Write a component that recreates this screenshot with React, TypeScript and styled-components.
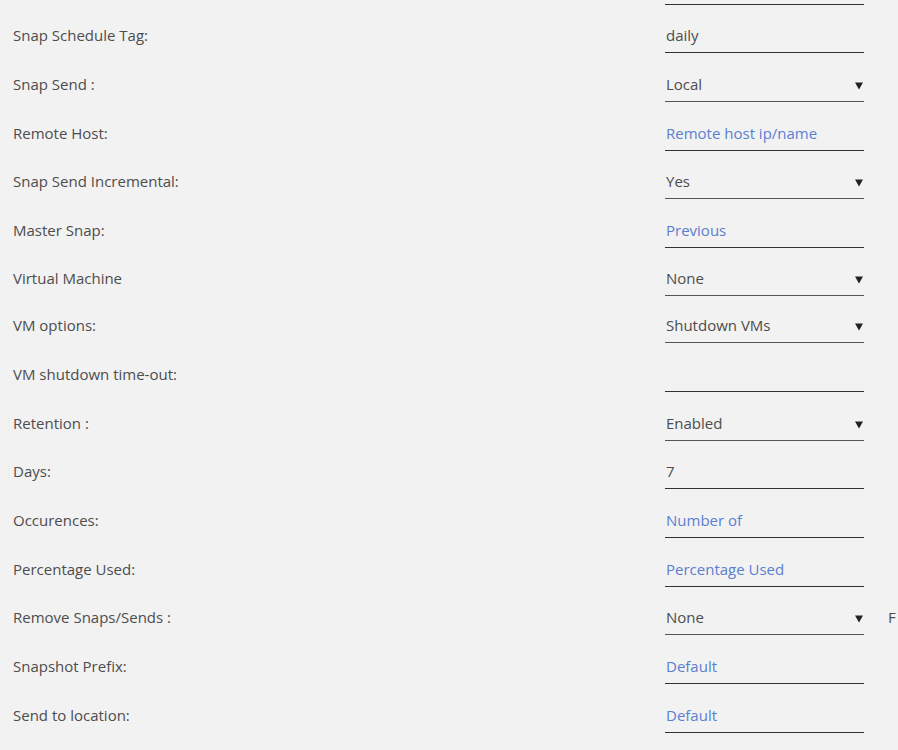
import React from 'react';
import styled, { createGlobalStyle } from 'styled-components';

const GlobalStyle = createGlobalStyle`
  html, body {
    margin: 0;
    padding: 0;
    background: #f2f2f2;
    font-family: "Open Sans", "Noto Sans", sans-serif;
    overflow: hidden;
  }
`;

type Field =
  | { label: string; kind: 'text'; value?: string; placeholder?: string }
  | { label: string; kind: 'select'; value: string };

const fields: Field[] = [
  { label: 'Snap Schedule Tag:', kind: 'text', value: 'daily' },
  { label: 'Snap Send :', kind: 'select', value: 'Local' },
  { label: 'Remote Host:', kind: 'text', placeholder: 'Remote host ip/name' },
  { label: 'Snap Send Incremental:', kind: 'select', value: 'Yes' },
  { label: 'Master Snap:', kind: 'text', placeholder: 'Previous' },
  { label: 'Virtual Machine', kind: 'select', value: 'None' },
  { label: 'VM options:', kind: 'select', value: 'Shutdown VMs' },
  { label: 'VM shutdown time-out:', kind: 'text' },
  { label: 'Retention :', kind: 'select', value: 'Enabled' },
  { label: 'Days:', kind: 'text', value: '7' },
  { label: 'Occurences:', kind: 'text', placeholder: 'Number of' },
  { label: 'Percentage Used:', kind: 'text', placeholder: 'Percentage Used' },
  { label: 'Remove Snaps/Sends :', kind: 'select', value: 'None' },
  { label: 'Snapshot Prefix:', kind: 'text', placeholder: 'Default' },
  { label: 'Send to location:', kind: 'text', placeholder: 'Default' },
];

const Form = styled.div`
  margin-top: -44px;
  width: 898px;
`;

const Row = styled.div<{ $h?: number }>`
  display: grid;
  grid-template-columns: 665px 199px 1fr;
  align-items: end;
  height: ${(p) => p.$h ?? 48.65}px;
`;

const Label = styled.div`
  padding-left: 13px;
  padding-bottom: 8px;
  font-size: 15px;
  color: #4d4d4d;
  white-space: nowrap;
`;

const Control = styled.div<{ $select?: boolean }>`
  position: relative;
  height: 34px;
  box-sizing: border-box;
  border-bottom: 1px solid ${(p) => (p.$select ? '#555' : '#333')};
  display: flex;
  align-items: center;
  padding: 0 0 1px 1px;
  font-size: 15px;
  color: #4d4d4d;
`;

const Placeholder = styled.span`
  color: #5a7fd0;
`;

const Arrow = styled.svg`
  position: absolute;
  right: 1px;
  top: 14px;
`;

const Extra = styled.div`
  padding-left: 24px;
  padding-bottom: 8px;
  font-size: 15px;
  color: #4d4d4d;
  white-space: nowrap;
`;

export default function App() {
  return (
    <>
      <GlobalStyle />
      <Form>
        <Row>
          <span />
          <Control />
        </Row>
        {fields.map((f, i) => (
          <Row key={i} $h={f.label === 'VM options:' ? 47 : undefined}>
            <Label>{f.label}</Label>
            <Control $select={f.kind === 'select'}>
              {f.kind === 'select' ? (
                <>
                  {f.value}
                  <Arrow width="8" height="8" viewBox="0 0 8 8">
                    <path d="M0 0.5 H8 L4 7.5 Z" fill="#222" />
                  </Arrow>
                </>
              ) : f.value ? (
                f.value
              ) : f.placeholder ? (
                <Placeholder>{f.placeholder}</Placeholder>
              ) : null}
            </Control>
            {f.label === 'Remove Snaps/Sends :' ? <Extra>F</Extra> : <span />}
          </Row>
        ))}
      </Form>
    </>
  );
}
